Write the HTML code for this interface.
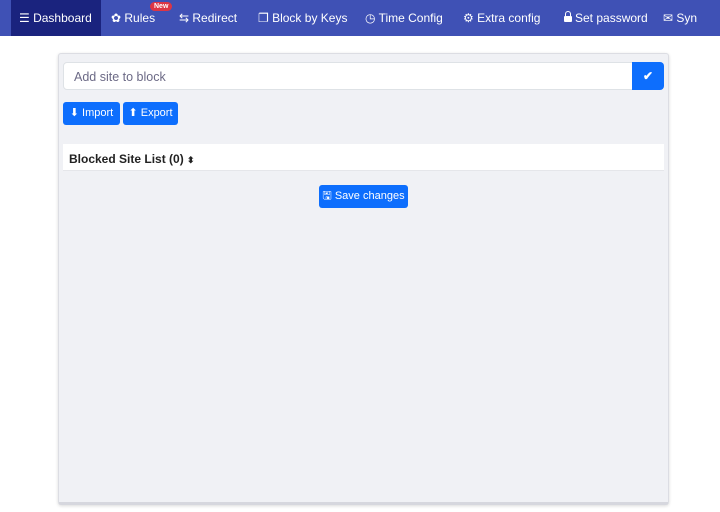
<!DOCTYPE html>
<html><head><style>
*{box-sizing:border-box;margin:0;padding:0}
body{width:720px;height:512px;background:#fff;font-family:"Liberation Sans",sans-serif;position:relative;overflow:hidden}
.nav{position:absolute;left:0;top:0;width:720px;height:36px;background:#3f51b5;color:#fff;font-size:12px}
.nav span{position:absolute;top:11px;white-space:nowrap}
.act{position:absolute;left:11px;top:0;width:90px;height:36px;background:#1a237e}
.badge{position:absolute;left:150px;top:2px;background:#dc3545;color:#fff;font-size:7px;border-radius:6px;padding:1px 4px;font-weight:bold}
.panel{position:absolute;left:58px;top:53px;width:611px;height:452px;background:#f0f1f5;border:1px solid #dcdde3;border-bottom:3px solid #d6d7de;border-radius:3px;box-shadow:0 1px 3px rgba(0,0,0,.15)}
.in{position:absolute;left:63px;top:62px;width:570px;height:28px;background:#fff;border:1px solid #dee2e6;border-radius:4px 0 0 4px;font-size:12.5px;color:#6c6a86;padding:7px 10px}
.ok{position:absolute;left:632px;top:62px;width:32px;height:28px;background:#0d6efd;border-radius:0 4px 4px 0;color:#fff;text-align:center;font-size:12px;line-height:28px;font-weight:bold}
.btn{position:absolute;background:#0d6efd;color:#fff;font-size:11px;border-radius:3px;line-height:23px;height:23px;text-align:center}
.list{position:absolute;left:63px;top:144px;width:601px;height:27px;background:#fff;border-bottom:1px solid #e5e6ea;font-size:12px;font-weight:bold;color:#222;padding:8px 6px}
.lock{display:inline-block;width:8px;height:6px;background:#fff;border-radius:1px;position:relative;margin-right:3px}
.lock:before{content:"";position:absolute;left:1px;top:-5px;width:4px;height:5px;border:1.5px solid #fff;border-bottom:none;border-radius:3px 3px 0 0}
</style></head><body>
<div class="nav">
<div class="act"></div>
<span style="left:19px">☰ Dashboard</span>
<span style="left:111px">✿ Rules</span>
<div class="badge">New</div>
<span style="left:179px">⇆ Redirect</span>
<span style="left:258px">❐ Block by Keys</span>
<span style="left:365px">◷ Time Config</span>
<span style="left:463px">⚙ Extra config</span>
<span style="left:564px"><i class="lock"></i>Set password</span>
<span style="left:663px">✉ Syn</span>
</div>
<div class="panel"></div>
<div class="in">Add site to block</div>
<div class="ok">✔</div>
<div class="btn" style="left:63px;top:102px;width:57px">⬇ Import</div>
<div class="btn" style="left:123px;top:102px;width:55px">⬆ Export</div>
<div class="list">Blocked Site List (0) <span style="font-size:9px">⬍</span></div>
<div class="btn" style="left:319px;top:185px;width:89px">🖫 Save changes</div>
</body></html>
